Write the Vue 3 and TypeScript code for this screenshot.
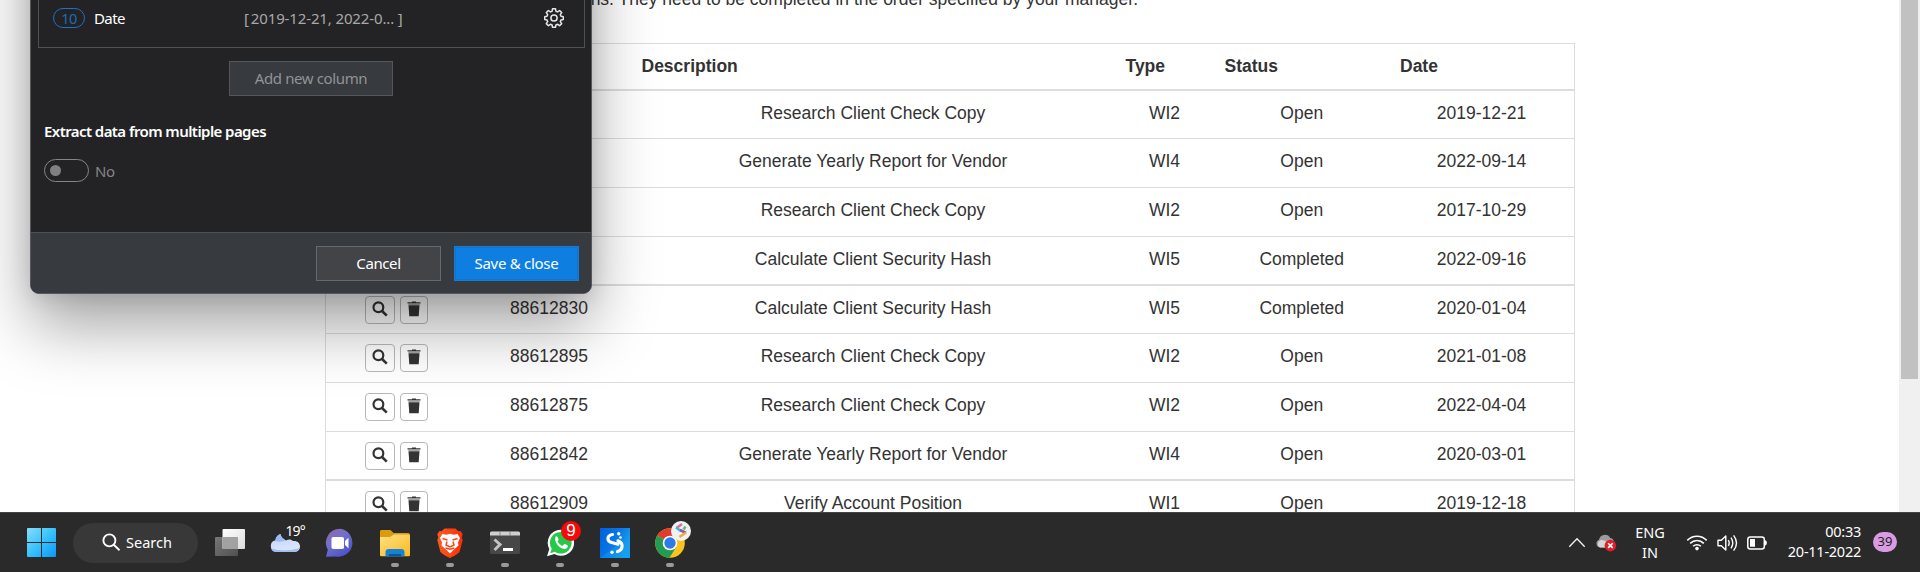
<script setup lang="ts">
interface WorkItem {
  id?: string
  description: string
  type: string
  status: string
  date: string
  thick?: boolean
  short?: boolean
}

const items: WorkItem[] = [
  { description: 'Research Client Check Copy', type: 'WI2', status: 'Open', date: '2019-12-21', thick: true },
  { description: 'Generate Yearly Report for Vendor', type: 'WI4', status: 'Open', date: '2022-09-14' },
  { description: 'Research Client Check Copy', type: 'WI2', status: 'Open', date: '2017-10-29' },
  { description: 'Calculate Client Security Hash', type: 'WI5', status: 'Completed', date: '2022-09-16', short: true },
  { id: '88612830', description: 'Calculate Client Security Hash', type: 'WI5', status: 'Completed', date: '2020-01-04', thick: true },
  { id: '88612895', description: 'Research Client Check Copy', type: 'WI2', status: 'Open', date: '2021-01-08' },
  { id: '88612875', description: 'Research Client Check Copy', type: 'WI2', status: 'Open', date: '2022-04-04' },
  { id: '88612842', description: 'Generate Yearly Report for Vendor', type: 'WI4', status: 'Open', date: '2020-03-01', short: true },
  { id: '88612909', description: 'Verify Account Position', type: 'WI1', status: 'Open', date: '2019-12-18', thick: true },
]
const headers = ['', '', 'Description', 'Type', 'Status', 'Date']
</script>

<template>
  <div class="screen">
    <main class="page">
      <section class="content">
        <p class="intro">ns. They need to be completed in the order specified by your manager.</p>
        <div class="table">
          <div class="row head">
            <div v-for="(h, i) in headers" :key="i">{{ h }}</div>
          </div>
          <div v-for="(it, i) in items" :key="i" class="row" :class="{ thick: it.thick, short: it.short }">
            <div class="actions">
              <span class="btn view">
                <svg width="16" height="16" viewBox="0 0 16 16"><circle cx="6.4" cy="6.3" r="4.9" fill="none" stroke="#333" stroke-width="2.2" /><path d="M10 10l4.8 4.6" stroke="#333" stroke-width="2.6" /></svg>
              </span>
              <span class="btn del">
                <svg width="14" height="16" viewBox="0 0 14 16"><path d="M.5 1.3H5V.4h4v.9h4.500v1.300H.5z" fill="#333" /><path d="M1.300 3.100h11.400v1H1.300z" fill="#999" /><path d="M1.500 4.300h11l-.8 11H2.300z" fill="#333" /></svg>
              </span>
            </div>
            <div>{{ it.id }}</div>
            <div>{{ it.description }}</div>
            <div>{{ it.type }}</div>
            <div>{{ it.status }}</div>
            <div>{{ it.date }}</div>
          </div>
        </div>
      </section>
      <div class="scroll"><div class="thumb"></div></div>
    </main>

    <aside class="dialog">
      <div class="body">
        <div class="columns">
          <span class="num">10</span>
          <span class="name">Date</span>
          <span class="value">[<i></i>2019-12-21, 2022-0... ]</span>
          <svg class="gear" width="20" height="20" viewBox="0 0 20 20" fill="none" stroke="#e6e6e6" stroke-width="1.5" stroke-linejoin="round"><path d="M8.500.8h3l.4 2.400 1.700.7 2-1.400 2.100 2.100-1.400 2 .7 1.700 2.300.4v2.800l-2.300.4-.7 1.700 1.400 2-2.100 2.100-2-1.400-1.700.7-.4 2.300h-3l-.4-2.300-1.700-.7-2 1.400-2.100-2.100 1.400-2-.7-1.700-2.300-.4V8.700L3 8.300l.7-1.700-1.400-2 2.100-2.100 2 1.400 1.700-.7z" /><circle cx="10" cy="10" r="3.100" /></svg>
        </div>
        <div class="add"><span>Add new column</span></div>
        <div class="extract"><span>Extract data from multiple pages</span></div>
        <div class="toggle-line"><span class="toggle"><i></i></span><span class="no">No</span></div>
      </div>
      <footer>
        <div class="action cancel"><span>Cancel</span></div>
        <div class="action save"><span>Save &amp; close</span></div>
      </footer>
    </aside>

    <nav class="taskbar">
      <div class="slot start">
        <svg width="30" height="30" viewBox="0 0 30 30"><defs><linearGradient id="win" gradientUnits="userSpaceOnUse" x1="0" y1="0" x2="30" y2="30"><stop offset="0" stop-color="#86defa" /><stop offset=".5" stop-color="#35c1fb" /><stop offset="1" stop-color="#0893f8" /></linearGradient></defs><path d="M0 1a1 1 0 0 1 1-1h13v14H0zM15 0h13a1 1 0 0 1 1 1v13H15zM0 15h14v14H1a1 1 0 0 1-1-1zM15 15h14v13a1 1 0 0 1-1 1H15z" fill="url(#win)" /></svg>
      </div>
      <div class="search">
        <svg width="19" height="19" viewBox="0 0 19 19" fill="none" stroke="#fff" stroke-width="1.900"><circle cx="7.400" cy="7.400" r="6" /><path d="M11.800 11.800l5.700 5.500" /></svg>
        <span>Search</span>
      </div>
      <div class="slot">
        <svg width="30" height="30" viewBox="0 0 30 30"><defs><linearGradient id="tv" x2="1" y2="1"><stop stop-color="#fff" /><stop offset="1" stop-color="#dcdcdc" /></linearGradient><linearGradient id="tv2" x2="1" y2="1"><stop stop-color="#777" /><stop offset="1" stop-color="#505050" /></linearGradient></defs><rect y="9" width="23" height="19" rx="1" fill="url(#tv2)" /><rect x="7.500" y="1" width="22.500" height="20" rx="1" fill="url(#tv)" /><path d="M7.500 9H23v12H7.500z" fill="#a2a2a2" /></svg>
      </div>
      <div class="slot">
        <svg width="30" height="30" viewBox="0 0 30 30"><defs><linearGradient id="cl" x2=".3" y2="1"><stop stop-color="#bcd0f4" /><stop offset="1" stop-color="#dbe7ff" /></linearGradient></defs><path d="M6 24a6 6 0 0 1-.5-11.800C6 8.500 8 6.500 10.500 6c.5 3.500 3 5 5.500 6.500 3-1.800 5.500-1 7 .5 4-.5 7 1.800 7 5.300 0 3.200-2 5.700-5.500 5.700z" fill="url(#cl)" /><path d="M5 12.500C5.500 9 8 6.500 10.500 6c.5 3.500 3 5 5.500 6.500-4 0-5 3-11 0z" fill="#92b4ee" opacity=".8" /><path d="M1 20c5 3 22 3 28 0-1 3-3 4-5 4H6c-2.500 0-4.300-1.500-5-4z" fill="#9fbdf3" /></svg>
        <span class="temp">19°</span>
      </div>
      <div class="slot">
        <svg width="30" height="30" viewBox="0 0 30 30"><defs><linearGradient id="ch" x2="0.700" y2="1"><stop stop-color="#9364a8" /><stop offset=".45" stop-color="#7370cc" /><stop offset="1" stop-color="#4a52c8" /></linearGradient></defs><path d="M15 .8a14 14 0 1 1-4.500 27.600L1 28.800l1.800-7A14 14 0 0 1 15 .8z" fill="url(#ch)" /><rect x="6.500" y="9" width="12.500" height="12" rx="1.800" fill="#fff" /><path d="M20 13l3.500-3.300v10.600L20 17z" fill="#fff" /></svg>
      </div>
      <div class="slot open">
        <svg width="30" height="30" viewBox="0 0 30 30"><defs><linearGradient id="fo" x2=".8" y2="1"><stop stop-color="#ffe083" /><stop offset="1" stop-color="#f9bd28" /></linearGradient></defs><path d="M0 3.500C0 2.500.8 2 1.500 2h9l3 3H28c1.200 0 2 .8 2 2v7H0z" fill="#dc9a10" /><path d="M0 9h10l4-2.500h14.500c1 0 1.500.6 1.500 1.500v19a1.200 1.200 0 0 1-1.200 1.200H1.200A1.200 1.200 0 0 1 0 27z" fill="url(#fo)" /><path d="M5.500 28.200V24c0-1.800 1.300-3 3-3h13c1.700 0 3 1.200 3 3v4.200z" fill="#1681d5" /><path d="M9 26h12v2.200H9z" fill="#0b5697" /></svg>
      </div>
      <div class="slot open">
        <svg width="30" height="30" viewBox="0 0 30 30"><defs><linearGradient id="br" x2="1"><stop stop-color="#ff5a20" /><stop offset="1" stop-color="#fb2e05" /></linearGradient></defs><path d="M9.500.5h11l2.800 2.800 2.200-.3 2.200 3.300-1 3 1 2.700-3 11.500c-.5 1.800-6 4.700-9.700 6.500-3.700-1.800-9.200-4.700-9.700-6.500l-3-11.500 1-2.700-1-3L4.500 3l2.200.3z" fill="url(#br)" /><path d="M7.500 6l3.500.8 4-1 4 1 3.500-.8 2.500 4-2 4.500.5 3-4.500 4-4 4-4-4-4.500-4 .5-3L5 10z" fill="#fff" /><path d="M7.500 10.500l5 1.500M22.500 10.500l-5 1.500M12 13.500l-1 3.500 4 2 4-2-1-3.500M10.500 20l4.500 1.200 4.500-1.200" fill="none" stroke="#fc4314" stroke-width="1.500" /></svg>
      </div>
      <div class="slot open">
        <svg width="30" height="30" viewBox="0 0 30 30"><rect y="3.500" width="30" height="22.500" rx="1.500" fill="#474747" /><path d="M0 7.500V5a1.500 1.500 0 0 1 1.500-1.500h27A1.500 1.500 0 0 1 30 5v2.500z" fill="#cfcfcf" /><path d="M10 3.500v4M20 3.500v4" stroke="#777" stroke-width=".8" /><path d="M4.500 11.500l5.500 5-5.500 5.500" fill="none" stroke="#c4c4c4" stroke-width="3" /><path d="M13 20h10v3H13z" fill="#fff" /></svg>
      </div>
      <div class="slot open">
        <svg width="30" height="30" viewBox="0 0 30 30"><path d="M15.500 1.800A13 13 0 1 1 9.500 26L2 28.300l2.300-7.200A13 13 0 0 1 15.500 1.800z" fill="#fff" /><path d="M15.500 4A10.800 10.800 0 1 1 9.800 23.800L5.300 25.200l1.400-4.500A10.800 10.800 0 0 1 15.500 4z" fill="#29c64c" /><path d="M10.500 8.800c.8-.9 1.600-.7 2 .1l1 2.400c.2.500-.2 1.200-1 2 1.400 2.600 3.200 3.900 5 4.600l1.500-1.600c.4-.5.9-.4 1.400-.1l2 1c1 .6.200 2.700-1 3.300-5 2.400-13-5.700-10.900-11.700z" fill="#fff" /></svg>
        <span class="badge">9</span>
      </div>
      <div class="slot open">
        <svg width="30" height="30" viewBox="0 0 30 30"><defs><linearGradient id="st" x2="1" y2=".5"><stop stop-color="#005fd8" /><stop offset=".6" stop-color="#087be8" /><stop offset="1" stop-color="#1ba1ee" /></linearGradient></defs><path d="M0 0h30v30H0z" fill="url(#st)" /><path d="M0 30L30 8v22z" fill="#159cf0" opacity=".45" /><g fill="none" stroke="#fff" stroke-width="3.200" stroke-linecap="round"><path d="M12.500 6.500C6.500 7.500 6.500 13.500 12.500 14.800l5.500 1.400M18 12.800c5.500 2 5.500 9-.5 10.700" /></g><circle cx="18.700" cy="5.800" r="1.700" fill="#fff" /><circle cx="20.500" cy="9.500" r="1.300" fill="#fff" /><circle cx="12" cy="24.300" r="1.700" fill="#fff" /></svg>
      </div>
      <div class="slot open">
        <svg width="30" height="30" viewBox="0 0 30 30"><circle cx="15" cy="15" r="14.800" fill="#fcc31e" /><path d="M15 15L2.200 7.600A14.800 14.800 0 0 1 27.800 7.600z" fill="#e33b2e" /><path d="M2.200 7.600A14.800 14.800 0 0 0 14.500 29.800L21.400 18.700 15 15z" fill="#239b50" /><path d="M15 8h12.800L15 15z" fill="#e33b2e" /><circle cx="15" cy="15" r="7.300" fill="#fff" /><circle cx="15" cy="15" r="5.700" fill="#2c7be8" /></svg>
        <svg class="profile" width="20" height="20" viewBox="0 0 20 20"><circle cx="10" cy="10" r="10" fill="#f1f1f1" /><g fill="none" stroke-width="2.600"><path d="M11 3L5.500 7" stroke="#e66aa0" /><path d="M5 6.500l5 3.500" stroke="#41b6d6" /><path d="M9 9l6 3" stroke="#8a55b5" /><path d="M15 11.500L8.500 16" stroke="#f0a844" /><path d="M14.500 5.500l-2 3" stroke="#66bd6b" /></g></svg>
      </div>

      <div class="tray">
        <svg class="chev" width="18" height="11" viewBox="0 0 18 11"><path d="M1.300 9.700L9 1.700l7.700 8" fill="none" stroke="#eee" stroke-width="1.400" /></svg>
        <svg class="cloud" width="21" height="18" viewBox="0 0 21 18"><path d="M4 13.500a4 4 0 0 1-1-7.700A6 6 0 0 1 14.200 4c3 .2 4 3 3.800 5.500l-4 4z" fill="#9b9b9b" /><path d="M4 13.500a4 4 0 0 1 1-7.500c4-.5 6 2 8 4v3.500z" fill="#d6d6d6" /><circle cx="14.400" cy="11.600" r="5.800" fill="#dc1f2b" /><path d="M12.100 9.300l4.600 4.600m0-4.600l-4.600 4.600" stroke="#fff" stroke-width="1.600" /></svg>
        <div class="lang"><span>ENG</span><span>IN</span></div>
        <svg class="wifi" width="22" height="17" viewBox="0 0 22 17" fill="none" stroke="#fff" stroke-width="1.500"><path d="M1.300 6.400a13.700 13.700 0 0 1 19.400 0M4.200 9.400a9.600 9.600 0 0 1 13.600 0M7.100 12.300a5.500 5.500 0 0 1 7.800 0" /><circle cx="11" cy="14.600" r="1.800" fill="#fff" stroke="none" /></svg>
        <svg class="sound" width="21" height="18" viewBox="0 0 21 18" fill="none" stroke="#fff" stroke-width="1.400"><path d="M1 6.200h3.300L8.800 2v14l-4.500-4.200H1zM11.300 6.100q1.800 2.900 0 5.800M14 3.700q3.600 5.300 0 10.600M16.600 1.400q5.800 7.600 0 15.200" stroke-linejoin="round" /></svg>
        <svg class="battery" width="21" height="14" viewBox="0 0 21 14"><rect x=".8" y=".9" width="16.500" height="12" rx="2.500" fill="none" stroke="#fff" stroke-width="1.500" /><path d="M3 3h5v7.800H3zM18 4.300c2.500 0 2.500 5.200 0 5.200z" fill="#fff" /></svg>
        <div class="clock"><span>00:33</span><span>20-11-2022</span></div>
        <span class="count">39</span>
      </div>
    </nav>
  </div>
</template>

<style>
body { margin: 0; overflow: hidden; background: #fff; }
</style>

<style scoped>
* { box-sizing: border-box; }
.screen { position: relative; width: 1920px; height: 572px; overflow: hidden; display: flex; flex-direction: column; background: #fff; font-family: "Noto Sans", "Open Sans", sans-serif; }
svg { display: block; flex: none; }
.page { height: 512px; flex: none; display: flex; justify-content: space-between; overflow: hidden; font: 17.5px/25px "Liberation Sans", Arial, sans-serif; color: #333; }
.content { width: 1250px; margin-left: 325px; }
.intro { margin: -13px 437px 31px 0; text-align: right; white-space: nowrap; height: 25px; }
.table { border: solid #ddd; border-width: 0 1px; height: 480px; }
.row { display: grid; grid-template-columns: 141px 164px 484px 99px 175.5px 184px; height: 49px; border-top: 1px solid #ddd; padding-top: 10px; text-align: center; white-space: nowrap; }
.row.short { height: 48px; }
.row.thick { border-top-width: 2px; }
.row.head { height: 46px; text-align: left; font-weight: 700; }
.row.head > div { padding-left: 10.5px; }
.actions { display: flex; justify-content: center; gap: 5px; }
.btn { height: 28px; border: 1px solid #b8b8b8; border-radius: 4px; display: flex; justify-content: center; padding-top: 4px; }
.view { width: 30px; }
.del { width: 28px; }
.scroll { width: 21px; background: #f0f0f0; }
.thumb { width: 17px; height: 379px; margin-left: 2px; background: #c1c1c1; }

.dialog { position: absolute; left: 30px; top: -300px; width: 562px; height: 594px; border: 1px solid #55585c; border-radius: 0 0 9px 9px; background: #232325; box-shadow: 0 32px 64px rgba(0, 0, 0, .36), 0 2px 21px rgba(0, 0, 0, .12); display: flex; flex-direction: column; color: #fff; font-size: 15px; line-height: 20px; white-space: nowrap; }
.body { height: 531px; padding: 299px 6px 0 7px; flex: none; }
.columns { height: 48px; border: solid #4c5057; border-width: 0 1px 1px; display: flex; align-items: flex-start; padding: 8px 20px 0 14px; }
.num { width: 32px; height: 20px; border: 1px solid #1b72c8; border-radius: 10px; color: #1f6bb8; font-size: 14.500px; letter-spacing: -.6px; line-height: 18px; text-align: center; }
.name { margin-left: 9px; width: 150px; letter-spacing: -.6px; }
.value { color: #a8a8a8; letter-spacing: -.13px; flex: 1; }
.value i { display: inline-block; width: 2px; }
.add { width: 164px; height: 35px; margin: 13px auto 0 191px; border: 1px solid #53575c; background: #373a3f; color: #929497; text-align: center; line-height: 33px; letter-spacing: -.38px; }
.extract { margin: 25px 0 0 6px; font-weight: 600; height: 20px; line-height: 20px; letter-spacing: -.57px; }
.toggle-line { display: flex; align-items: flex-start; height: 24px; margin: 18px 0 0 6px; }
.toggle { width: 45px; height: 23px; border: 1px solid #858585; border-radius: 12px; padding: 5px; }
.toggle i { display: block; width: 11px; height: 11px; border-radius: 50%; background: #808080; }
.no { margin-left: 6px; margin-top: 2px; color: #858585; letter-spacing: -.3px; }
footer { flex: 1; border-top: 1px solid #4d5055; background: #373a3f; border-radius: 0 0 8px 8px; display: flex; justify-content: flex-end; gap: 13px; padding: 13px 12px 0 0; }
.action { width: 125px; height: 35px; text-align: center; line-height: 33px; border: 1px solid #67696d; background: #424448; letter-spacing: -.4px; }
.save { background: #0e7fe1; border-color: #0e7fe1; box-shadow: inset 0 0 0 1px #1674c8; letter-spacing: -.28px; }

.taskbar { position: relative; height: 60px; flex: none; background: #2a2a2a; border-top: 1px solid #444; display: flex; align-items: center; color: #fff; padding-left: 14px; font-size: 14.500px; }
.slot { position: relative; width: 55px; height: 59px; display: flex; align-items: center; justify-content: center; flex: none; }
.open::after { content: ""; position: absolute; left: 23px; bottom: 5px; width: 8px; height: 4px; border-radius: 2px; background: #9a9a9a; }
.search { width: 125px; height: 40px; margin: 0 4.5px 0 4px; border-radius: 20px; background: #383838; display: flex; align-items: center; padding-left: 29px; gap: 5px; flex: none; }
.search span { padding-bottom: 2px; }
.search svg { margin-top: -1px; }
.temp { position: absolute; left: 28px; top: 9px; font-size: 14px; line-height: 18px; letter-spacing: -.9px; }
.badge { position: absolute; left: 28.500px; top: 8px; width: 20px; height: 20px; border-radius: 50%; background: #f70909; font: 17px/20px "Liberation Sans", sans-serif; text-align: center; }
.profile { position: absolute; left: 28.500px; top: 8px; }
.tray { margin-left: auto; display: flex; align-items: center; padding-right: 23px; height: 59px; line-height: 20px; }
.cloud { margin-left: 10px; }
.lang { width: 40px; margin-left: 13px; padding-bottom: 2px; display: flex; flex-direction: column; align-items: center; }
.wifi { margin-left: 16px; }
.sound { margin-left: 9px; }
.battery { margin-left: 9px; }
.clock { width: 93px; padding-bottom: 3px; letter-spacing: -.25px; display: flex; flex-direction: column; align-items: flex-end; white-space: nowrap; }
.count { width: 24px; height: 20px; border-radius: 10px; background: #d99be2; color: #222; font-size: 13px; line-height: 19px; text-align: center; margin: 0 0 1px 12px; }
</style>
